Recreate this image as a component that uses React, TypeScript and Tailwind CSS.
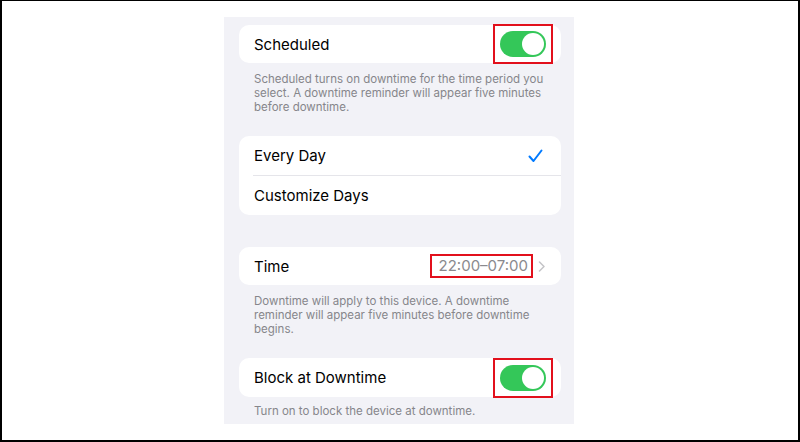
import React from 'react';

const font = { fontFamily: 'Inter, "Noto Sans", sans-serif' };

const Toggle = () => (
  <div className="border-2 border-[#e2101c] px-[5px] py-[5px] flex items-center">
    <div className="w-[46px] h-[26px] rounded-full bg-[#34c759] flex items-center justify-end pr-[2px]">
      <div className="w-[22px] h-[22px] rounded-full bg-white" />
    </div>
  </div>
);

const Check = () => (
  <svg width="15" height="14" viewBox="0 0 15 14" fill="none">
    <path d="M1.5 7.5 L5.5 12 L13.5 1.5" stroke="#007aff" strokeWidth="2" strokeLinecap="round" strokeLinejoin="round" />
  </svg>
);

const Chevron = () => (
  <svg width="7" height="11" viewBox="0 0 7 11" fill="none">
    <path d="M1.5 1 L6 5.5 L1.5 10" stroke="#c4c4c7" strokeWidth="1.5" strokeLinecap="round" strokeLinejoin="round" />
  </svg>
);

const Note = ({ children }: { children: React.ReactNode }) => (
  <p className="px-[15px] text-[11.5px] leading-[14px] text-[#86868b]">{children}</p>
);

export default function App() {
  return (
    <div
      className="w-[800px] h-[442px] bg-white border-t border-r-2 border-b-2 border-l-2 border-black pl-[222px] pt-[16px] overflow-hidden"
      style={font}
    >
      <div className="w-[350px] h-[407px] bg-[#f2f2f7] pl-[15px] pr-[13px] pt-[8px] flex flex-col">
        <div className="h-[38px] bg-white rounded-[10px] pl-[15px] pr-[8px] flex items-center justify-between">
          <span className="text-[15px] text-black pt-[2px]">Scheduled</span>
          <Toggle />
        </div>
        <div className="mt-[9px]">
          <Note>
            Scheduled turns on downtime for the time period you select. A downtime reminder will appear five minutes before downtime.
          </Note>
        </div>

        <div className="mt-[22px] bg-white rounded-[10px] flex flex-col">
          <div className="h-[39px] pl-[15px] pr-[18px] flex items-center justify-between">
            <span className="text-[15px] text-black pt-[2px]">Every Day</span>
            <Check />
          </div>
          <div className="ml-[14px] h-px bg-[#e5e5ea]" />
          <div className="h-[39px] pl-[15px] flex items-center">
            <span className="text-[15px] text-black pt-[2px]">Customize Days</span>
          </div>
        </div>

        <div className="mt-[32px] h-[38px] bg-white rounded-[10px] pl-[15px] pr-[16px] flex items-center justify-between">
          <span className="text-[15px] text-black pt-[2px]">Time</span>
          <div className="flex items-center gap-[5px]">
            <div className="border-2 border-[#e2101c] h-[24px] pl-[7px] pr-[3px] flex items-center">
              <span className="text-[15px] text-[#8a8a8e] pt-[1px]">22:00–07:00</span>
            </div>
            <Chevron />
          </div>
        </div>
        <div className="mt-[9px]">
          <Note>
            Downtime will apply to this device. A downtime reminder will appear five minutes before downtime begins.
          </Note>
        </div>

        <div className="mt-[22px] h-[39px] bg-white rounded-[10px] pl-[15px] pr-[8px] flex items-center justify-between">
          <span className="text-[15px] text-black pt-[2px]">Block at Downtime</span>
          <Toggle />
        </div>
        <div className="mt-[7px]">
          <Note>Turn on to block the device at downtime.</Note>
        </div>
      </div>
    </div>
  );
}
